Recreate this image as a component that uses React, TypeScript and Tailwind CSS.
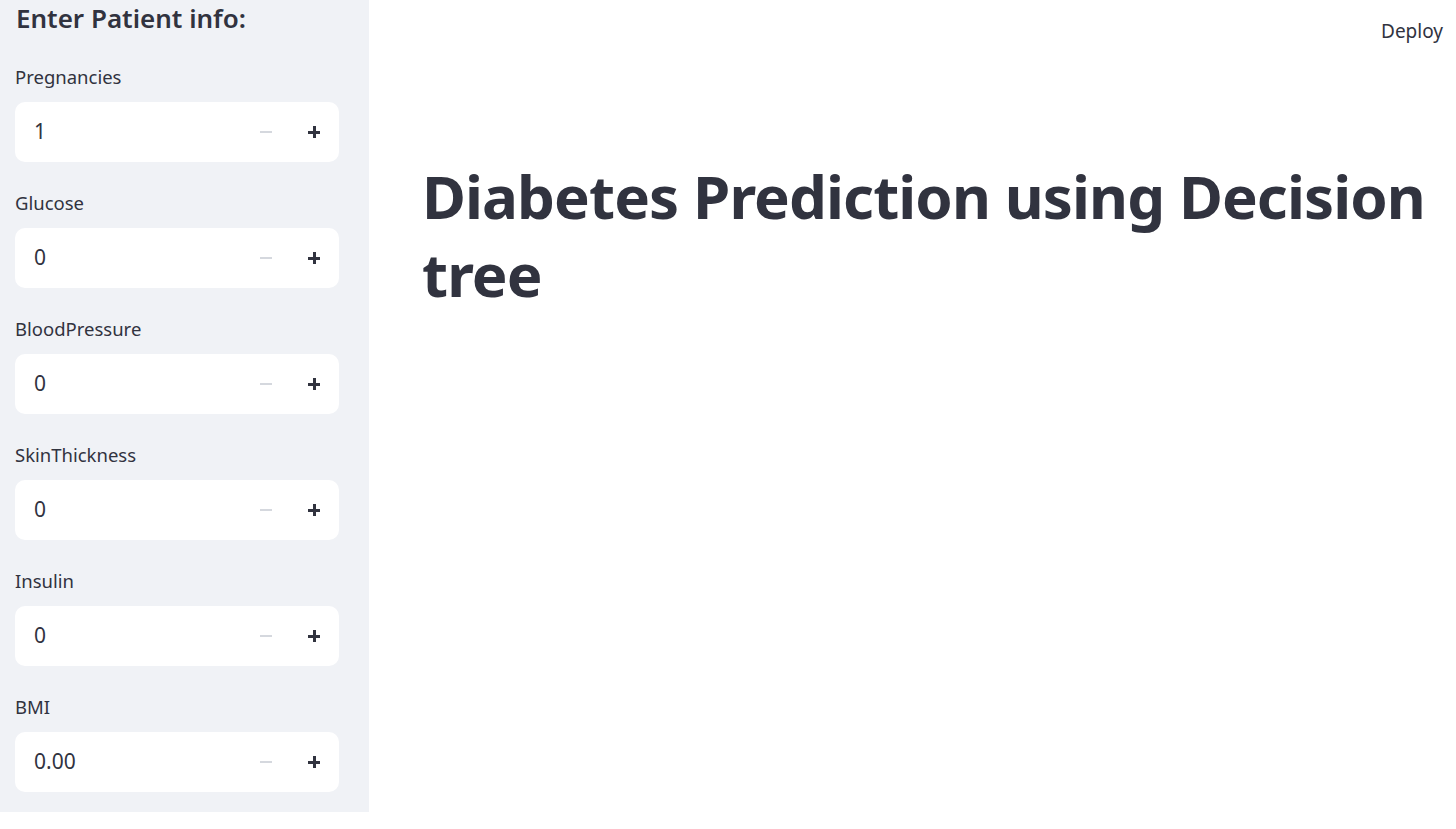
const fields = [
  { label: "Pregnancies", value: "1" },
  { label: "Glucose", value: "0" },
  { label: "BloodPressure", value: "0" },
  { label: "SkinThickness", value: "0" },
  { label: "Insulin", value: "0" },
  { label: "BMI", value: "0.00" },
]

const font = { fontFamily: '"Source Sans Pro", "Noto Sans", "Open Sans", sans-serif' }

function NumberField({ label, value }: { label: string; value: string }) {
  return (
    <div className="flex flex-col">
      <div className="h-[24px] flex items-center text-[18.5px] text-[#31333f] leading-none">{label}</div>
      <div className="mt-[13px] h-[60px] w-[324px] bg-white rounded-[10px] flex items-center pl-[19px] pr-[19px]">
        <div className="flex-1 text-[21px] text-[#31333f]">{value}</div>
        <div className="w-[12px] h-[2px] bg-[#d5d8de] mr-[36px]" />
        <div className="relative w-[12px] h-[12px]">
          <div className="absolute left-0 top-[5px] w-[12px] h-[3px] bg-[#31333f]" />
          <div className="absolute top-0 left-[4.5px] w-[3px] h-[12px] bg-[#31333f]" />
        </div>
      </div>
    </div>
  )
}

export default function App() {
  return (
    <div className="flex w-[1456px] h-[829px] bg-white" style={font}>
      <aside className="w-[369px] h-[812px] bg-[#f0f2f6] px-[15px] pt-[1px] flex flex-col">
        <h2 className="text-[26px] font-semibold text-[#31333f] ml-[1px] leading-[34px]">Enter Patient info:</h2>
        <div className="mt-[30px] flex flex-col gap-[29px]">
          {fields.map((f) => (
            <NumberField key={f.label} label={f.label} value={f.value} />
          ))}
        </div>
      </aside>
      <main className="flex-1 relative">
        <div className="absolute top-[17px] right-[13px] text-[19px] text-[#31333f]">Deploy</div>
        <h1 className="ml-[53px] mt-[157px] w-[1020px] text-[60px] font-bold text-[#31333f] leading-[78px] tracking-[-0.015em]">
          Diabetes Prediction using Decision tree
        </h1>
      </main>
    </div>
  )
}
